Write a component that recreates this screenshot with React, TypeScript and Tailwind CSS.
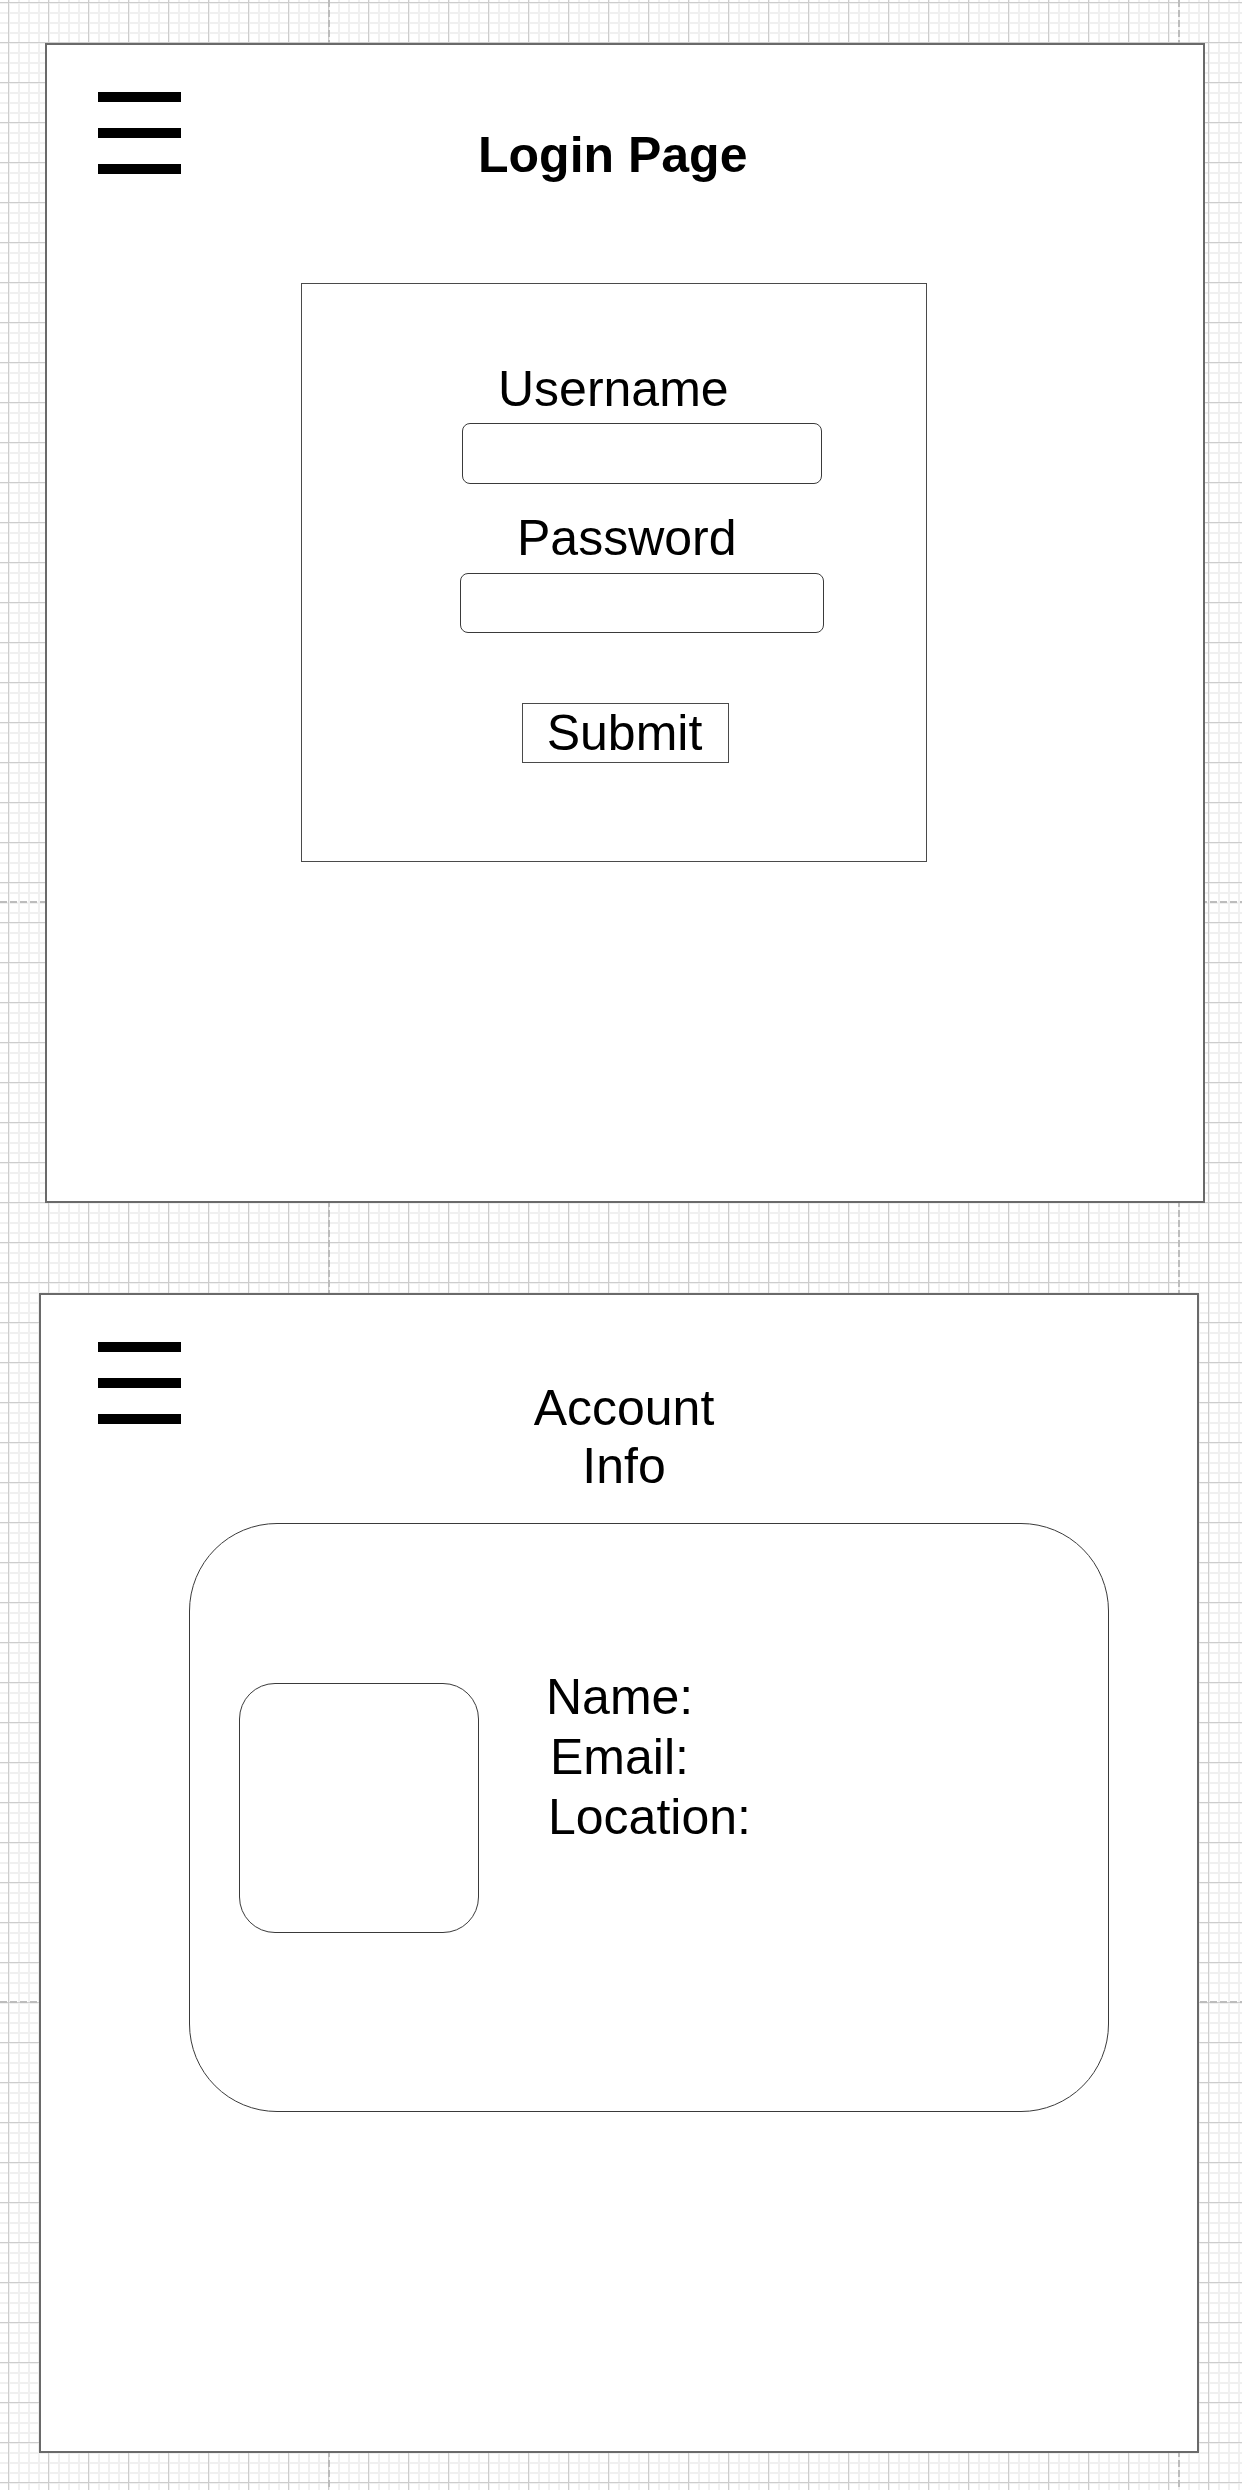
function Hamburger() {
  return (
    <div className="flex flex-col gap-[26px]">
      <div className="w-[83px] h-[10px] bg-black" />
      <div className="w-[83px] h-[10px] bg-black" />
      <div className="w-[83px] h-[10px] bg-black" />
    </div>
  );
}

function LoginFrame() {
  return (
    <section className="relative ml-[45px] w-[1160px] h-[1160px] border-2 border-[#6a6a6a] bg-white flex flex-col">
      <header className="flex items-start">
        <div className="ml-[51px] mt-[47px]">
          <Hamburger />
        </div>
        <h1 className="ml-[297px] mt-[85px] text-[50px] leading-[50px] font-bold">Login Page</h1>
      </header>

      <form className="ml-[254px] mt-[103px] w-[626px] h-[579px] border border-[#4a4a4a] flex flex-col items-start">
        <label className="ml-[196px] mt-[77px] text-[50px] leading-[56px]">Username</label>
        <input
          type="text"
          className="ml-[160px] mt-[6px] w-[360px] h-[61px] border border-[#3a3a3a] rounded-[8px] bg-white"
        />
        <label className="ml-[215px] mt-[26px] text-[50px] leading-[56px]">Password</label>
        <input
          type="password"
          className="ml-[158px] mt-[7px] w-[364px] h-[60px] border border-[#3a3a3a] rounded-[8px] bg-white"
        />
        <button
          type="button"
          className="ml-[220px] mt-[70px] w-[207px] h-[60px] border border-[#4a4a4a] flex items-center justify-center pr-[2px] text-[50px] leading-[56px]"
        >
          Submit
        </button>
      </form>
    </section>
  );
}

function AccountFrame() {
  return (
    <section className="relative ml-[39px] mt-[90px] w-[1160px] h-[1160px] border-2 border-[#6a6a6a] bg-white flex flex-col">
      <header className="flex items-start">
        <div className="ml-[57px] mt-[47px]">
          <Hamburger />
        </div>
        <h2 className="ml-[323px] mt-[84px] w-[240px] text-center text-[50px] leading-[58px]">Account Info</h2>
      </header>

      <div className="ml-[148px] mt-[28px] w-[920px] h-[589px] border border-[#3a3a3a] rounded-[88px] flex items-start pl-[49px] pt-[143px]">
        <div className="mt-[16px] w-[240px] h-[250px] border border-[#3a3a3a] rounded-[36px]" />
        <div className="ml-[67px] flex flex-col text-[50px] leading-[60px]">
          <span>Name:</span>
          <span className="pl-[4px]">Email:</span>
          <span className="pl-[2px]">Location:</span>
        </div>
      </div>
    </section>
  );
}

export default function App() {
  return (
    <div className="relative w-[1242px] min-h-[2490px] overflow-hidden bg-white pt-[43px] text-black font-['Liberation_Sans',Arial,sans-serif] [background-image:linear-gradient(to_right,#cdcdcd_1px,transparent_1px),linear-gradient(to_bottom,#cdcdcd_1px,transparent_1px),linear-gradient(to_right,#f0f0f0_2px,transparent_2px),linear-gradient(to_bottom,#f0f0f0_2px,transparent_2px)] [background-size:40px_40px,40px_40px,10px_10px,10px_10px] [background-position:8px_2px]">
      {/* page break guides */}
      <div className="absolute left-[328px] top-0 h-full w-[2px] [background-image:repeating-linear-gradient(to_bottom,#bdbdbd_0px,#bdbdbd_7px,transparent_7px,transparent_10px)]" />
      <div className="absolute left-[1178px] top-0 h-full w-[2px] [background-image:repeating-linear-gradient(to_bottom,#bdbdbd_0px,#bdbdbd_7px,transparent_7px,transparent_10px)]" />
      <div className="absolute top-[901px] left-0 w-full h-[2px] [background-image:repeating-linear-gradient(to_right,#bdbdbd_0px,#bdbdbd_7px,transparent_7px,transparent_10px)]" />
      <div className="absolute top-[2001px] left-0 w-full h-[2px] [background-image:repeating-linear-gradient(to_right,#bdbdbd_0px,#bdbdbd_7px,transparent_7px,transparent_10px)]" />

      <LoginFrame />
      <AccountFrame />
    </div>
  );
}
